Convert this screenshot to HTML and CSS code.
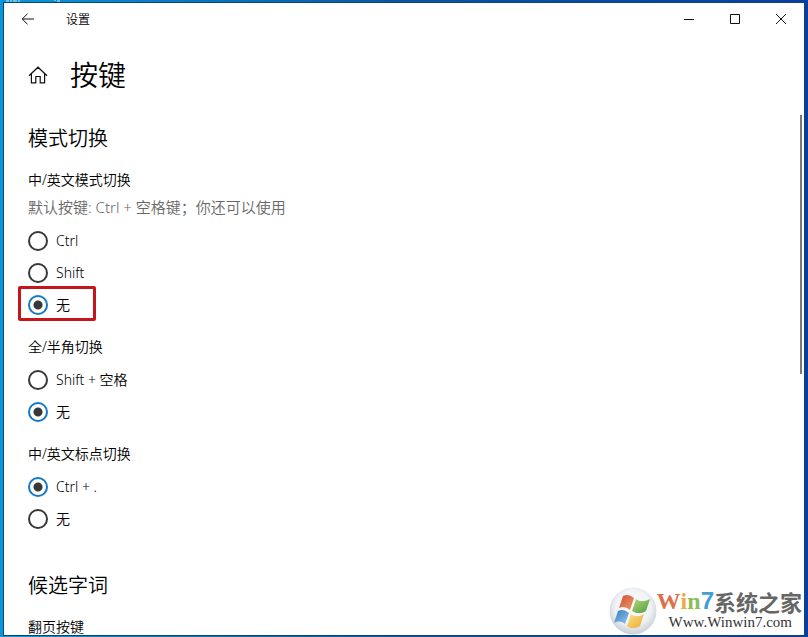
FILE: index.html
```html
<!DOCTYPE html>
<html lang="zh-CN">
<head>
  <meta charset="UTF-8" />
  <meta name="viewport" content="width=device-width, initial-scale=1.0"/>
  <title>设置</title>
  <link rel="stylesheet" href="styles.css">
</head>
<body>

  <!-- desktop icon labels peeking out above the window -->
  <svg class="desktop-icons" width="64" height="3" viewBox="0 0 64 3" aria-hidden="true">
    <path d="M6 1h3M11 0v2M13 1h4M19 0v2M54 0h2M57 1h3" stroke="#d7e9f2" stroke-width="1" fill="none"/>
  </svg>

  <div class="window">
    <header class="titlebar">
      <button class="back" aria-label="返回">
        <svg width="14" height="12" viewBox="0 0 14 12"><path d="M6.5 .8 1.2 6l5.3 5.2M1.2 6H13"/></svg>
      </button>
      <span class="title">设置</span>
      <div class="controls">
        <button aria-label="最小化"><svg width="10" height="10" viewBox="0 0 10 10"><path d="M0 5.5h10"/></svg></button>
        <button aria-label="最大化"><svg width="10" height="10" viewBox="0 0 10 10"><path d="M.5 .5h9v9h-9z"/></svg></button>
        <button aria-label="关闭"><svg width="10" height="10" viewBox="0 0 10 10"><path d="M0 0l10 10M10 0 0 10"/></svg></button>
      </div>
    </header>

    <main class="content">
      <div class="page-head">
        <a href="#" class="home" aria-label="主页">
          <svg width="20" height="18" viewBox="0 0 20 18"><path d="M1 9.8 10 1.2l9 8.6M3.4 7.6v9.2h4.4v-6.3h4.4v6.3h4.4V7.6"/></svg>
        </a>
        <h1>按键</h1>
      </div>

      <h2>模式切换</h2>

      <fieldset>
        <legend>中/英文模式切换</legend>
        <p class="hint">默认按键: Ctrl + 空格键；你还可以使用</p>
        <label class="option"><input type="radio" name="mode">Ctrl</label>
        <label class="option"><input type="radio" name="mode">Shift</label>
        <label class="option marked"><input type="radio" name="mode" checked>无</label>
      </fieldset>

      <fieldset>
        <legend>全/半角切换</legend>
        <label class="option"><input type="radio" name="width">Shift + 空格</label>
        <label class="option"><input type="radio" name="width" checked>无</label>
      </fieldset>

      <fieldset>
        <legend>中/英文标点切换</legend>
        <label class="option"><input type="radio" name="punct" checked>Ctrl + .</label>
        <label class="option"><input type="radio" name="punct">无</label>
      </fieldset>

      <h2 class="next">候选字词</h2>

      <fieldset>
        <legend>翻页按键</legend>
      </fieldset>
    </main>

    <div class="scrollbar"></div>
  </div>

  <div class="watermark">
    <svg class="orb" width="48" height="48" viewBox="0 0 48 48" aria-hidden="true">
      <defs>
        <radialGradient id="orb" cx="50%" cy="42%" r="58%">
          <stop offset="0" stop-color="#ffffff"/>
          <stop offset=".65" stop-color="#f0f2f5"/>
          <stop offset="1" stop-color="#c6ced6"/>
        </radialGradient>
        <linearGradient id="red" x2="1" y2="1"><stop stop-color="#cf5038"/><stop offset="1" stop-color="#f09a68"/></linearGradient>
        <linearGradient id="green" x2="1" y2="1"><stop stop-color="#b5d97a"/><stop offset="1" stop-color="#4d9c3c"/></linearGradient>
        <linearGradient id="blue" x2="1" y2="1"><stop stop-color="#3979bd"/><stop offset="1" stop-color="#8fcbee"/></linearGradient>
        <linearGradient id="yellow" x2="1" y2="1"><stop stop-color="#fbe28a"/><stop offset="1" stop-color="#eda831"/></linearGradient>
      </defs>
      <circle cx="24" cy="24" r="23.5" fill="url(#orb)"/>
      <path fill="url(#red)" d="M14 9c4-2 7-1 11 2l-4 12c-4-3-7-4-11-2z"/>
      <path fill="url(#green)" d="M27 12c4 3 8 3 14 0l-4 12c-5 3-9 3-14 0z"/>
      <path fill="url(#blue)" d="M9 24c4-2 7-1 11 2l-4 11c-4-3-7-3-11-1z"/>
      <path fill="url(#yellow)" d="M22 27c4 3 8 3 13 0l-4 12c-5 3-9 3-13 0z"/>
    </svg>
    <div class="brand">
      <div class="brand-name"><b class="w">W</b><b class="i">i</b><b class="n">n</b><b class="seven">7</b><span>系统之家</span></div>
      <div class="brand-url">Www.Winwin7.com</div>
    </div>
  </div>

</body>
</html>
```
FILE: styles.css
```css
:root {
  --accent: #1478c4;
  --text: #000;
  --muted: #686868;
  --ring: #383838;
  --mark: #c5161d;
}

*,
*::after {
  box-sizing: border-box;
}

body {
  margin: 0;
  height: 100vh;
  padding: 3px 4px 2px;
  overflow: hidden;
  position: relative;
  background: linear-gradient(to right, #0a97d9, #0a55a2 50%, #0a3ea2);
  font-family: "Noto Sans", "Noto Sans CJK SC", sans-serif;
  font-size: 14px;
  font-weight: 350;
  color: var(--text);
}

h1, h2, p, fieldset {
  margin: 0;
  font-weight: 350;
}

button {
  border: none;
  padding: 0;
  background: none;
}

.desktop-icons {
  position: absolute;
  top: 0;
  left: 0;
}

.window {
  position: relative;
  height: 100%;
  overflow: hidden;
  background: #fff;
  box-shadow: 0 0 0 1px #0b4670;
}

.titlebar {
  display: flex;
  align-items: center;
  height: 32px;
}

.titlebar svg,
.home svg {
  display: block;
  margin: auto;
  fill: none;
  stroke: #111;
  stroke-width: 1;
}

.home svg {
  stroke-width: 1.2;
}

.back {
  width: 48px;
  height: 32px;
}

.title {
  margin-left: 14px;
  font-size: 12px;
}

.controls {
  display: flex;
  margin-left: auto;
}

.controls button {
  width: 46px;
  height: 32px;
}

.content {
  padding: 18px 24px 0;
}

.page-head {
  display: flex;
  align-items: center;
  gap: 22px;
  height: 44px;
  margin-bottom: 28px;
}

.home {
  width: 20px;
}

h1 {
  font-size: 28px;
  line-height: 44px;
}

h2 {
  margin-bottom: 17px;
  font-size: 20px;
  line-height: 28px;
}

h2.next {
  margin-top: 37px;
}

fieldset {
  border: none;
  padding: 0;
}

fieldset + fieldset {
  margin-top: 16px;
}

legend {
  padding: 0;
  margin-bottom: 7px;
  line-height: 20px;
}

.hint {
  margin-bottom: 8px;
  font-size: 15px;
  line-height: 20px;
  color: var(--muted);
}

.option {
  position: relative;
  display: flex;
  align-items: center;
  gap: 8px;
  width: fit-content;
  height: 32px;
  line-height: 18px;
}

.option input {
  appearance: none;
  width: 20px;
  height: 20px;
  margin: 0;
  border: 2px solid var(--ring);
  border-radius: 50%;
}

.option input:checked {
  border-color: var(--accent);
  background: radial-gradient(circle, var(--ring) 4px, transparent 5px);
}

/* red frame around the recommended choice */
.marked::after {
  content: "";
  position: absolute;
  top: -3px;
  left: -10px;
  width: 78px;
  height: 35px;
  border: 3px solid var(--mark);
  border-radius: 2px;
}

.scrollbar {
  position: absolute;
  top: 112px;
  right: 2px;
  width: 2px;
  height: 41%;
  background: #7d787b;
}

.watermark {
  position: absolute;
  right: 6px;
  bottom: 2px;
  display: flex;
  align-items: center;
}

.orb {
  display: block;
}

.brand-name {
  display: flex;
  font-family: "Noto Sans CJK SC", sans-serif;
  font-size: 22px;
  line-height: 22px;
  font-weight: 700;
  color: #666;
}

.brand-name b {
  font-family: "Liberation Serif", serif;
  font-size: 24px;
}

.brand-name .w { color: #dc7049; }
.brand-name .i { color: #efa944; }
.brand-name .n { color: #8dbd58; }
.brand-name .seven { color: #419ed0; font-family: "Liberation Sans", sans-serif; }

.brand-url {
  padding-left: 12px;
  font-family: "Liberation Serif", serif;
  font-size: 15px;
  line-height: 20px;
  color: #333;
}
```
